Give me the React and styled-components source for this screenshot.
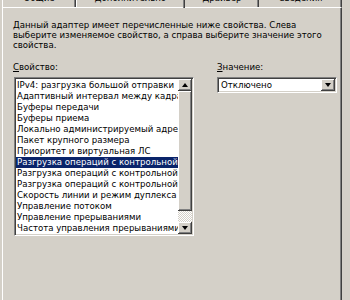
import React from 'react'
import styled, { createGlobalStyle } from 'styled-components'

const GlobalStyle = createGlobalStyle`
  html, body {
    margin: 0;
    padding: 0;
    background: #d4d0c8;
  }
  body {
    width: 350px;
    height: 300px;
    overflow: hidden;
    font-family: "DejaVu Sans", "Liberation Sans", sans-serif;
    font-size: 8.6px;
    color: #000;
  }
`

const Dialog = styled.div`
  display: flex;
  flex-direction: column;
  width: 350px;
  height: 300px;
  padding-left: 2px;
  box-sizing: border-box;
`

const TabRow = styled.div`
  display: flex;
  height: 18px;
  margin-top: -11px;
  width: 340px;
`

const Tab = styled.div`
  box-sizing: border-box;
  width: ${props => props.$width}px;
  height: 18px;
  padding-top: 4px;
  line-height: 10px;
  text-align: center;
  border-left: 1px solid ${props => props.$first || props.$selected ? '#ffffff' : 'transparent'};
  border-right: 1px solid #404040;
  box-shadow: inset -1px 0 #808080;
  position: relative;
  z-index: ${props => props.$selected ? 1 : 0};
  margin-bottom: ${props => props.$selected ? '-1px' : '0'};
  height: ${props => props.$selected ? 19 : 18}px;
`

const Panel = styled.div`
  flex: 1;
  width: 340px;
  box-sizing: border-box;
  border-top: 1px solid #ffffff;
  border-left: 1px solid #ffffff;
  border-right: 1px solid #404040;
  box-shadow: inset -1px 0 #808080;
  padding: 12px 0 0 10px;
`

const Description = styled.div`
  line-height: 10px;
  white-space: nowrap;
`

const Columns = styled.div`
  display: flex;
  gap: 23px;
  margin-top: 12px;
`

const Column = styled.div`
  display: flex;
  flex-direction: column;
  gap: 5px;
  width: ${props => props.$width}px;
`

const Label = styled.div`
  line-height: 10px;
  padding-left: ${props => props.$indent || 0}px;
`

const sunken = `
  border-style: solid;
  border-width: 1px;
  border-color: #808080 #ffffff #ffffff #808080;
  box-shadow: inset 1px 1px #404040, inset -1px -1px #d4d0c8;
`

const ListBox = styled.div`
  ${sunken}
  box-sizing: border-box;
  height: 159px;
  margin-left: 1px;
  padding: 1px;
  background: #ffffff;
  display: flex;
`

const Items = styled.div`
  flex: 1;
  overflow: hidden;
  padding-top: 1px;
`

const Item = styled.div`
  height: 11px;
  line-height: 11px;
  padding-left: 1px;
  white-space: nowrap;
  overflow: hidden;
  background: ${props => props.$selected ? '#0a246a' : 'transparent'};
  color: ${props => props.$selected ? '#ffffff' : '#000000'};
`

const ScrollBar = styled.div`
  width: 14px;
  display: flex;
  flex-direction: column;
`

const raised = `
  background: #d4d0c8;
  box-sizing: border-box;
  box-shadow: inset -1px -1px #404040, inset 1px 1px #ffffff, inset -2px -2px #808080, inset 2px 2px #d4d0c8;
`

const ScrollButton = styled.div`
  ${raised}
  width: 14px;
  height: 12px;
  display: flex;
  align-items: center;
  justify-content: center;
`

const Thumb = styled.div`
  ${raised}
  height: 120px;
`

const Track = styled.div`
  flex: 1;
  background-color: #ffffff;
  background-image: linear-gradient(45deg, #d4d0c8 25%, transparent 25%, transparent 75%, #d4d0c8 75%),
    linear-gradient(45deg, #d4d0c8 25%, transparent 25%, transparent 75%, #d4d0c8 75%);
  background-size: 2px 2px;
  background-position: 0 0, 1px 1px;
`

const Arrow = styled.div`
  width: 0;
  height: 0;
  border-left: 3.5px solid transparent;
  border-right: 3.5px solid transparent;
  border-${props => props.$up ? 'bottom' : 'top'}: 4px solid #000000;
`

const Combo = styled.div`
  ${sunken}
  box-sizing: border-box;
  height: 16px;
  padding: 1px;
  background: #ffffff;
  display: flex;
  align-items: center;
`

const ComboText = styled.div`
  flex: 1;
  padding-left: 2px;
  line-height: 12px;
`

const properties = [
  'IPv4: разгрузка большой отправки',
  'Адаптивный интервал между кадрами',
  'Буферы передачи',
  'Буферы приема',
  'Локально администрируемый адрес',
  'Пакет крупного размера',
  'Приоритет и виртуальная ЛС',
  'Разгрузка операций с контрольной',
  'Разгрузка операций с контрольной',
  'Разгрузка операций с контрольной',
  'Скорость линии и режим дуплекса',
  'Управление потоком',
  'Управление прерываниями',
  'Частота управления прерываниями',
]

export default function App() {
  return (
    <>
      <GlobalStyle />
      <Dialog>
        <TabRow>
          <Tab $width={74} $first>Общие</Tab>
          <Tab $width={109} $selected>Дополнительно</Tab>
          <Tab $width={74}>Драйвер</Tab>
          <Tab $width={83}>Сведения</Tab>
        </TabRow>
        <Panel>
          <Description>
            Данный адаптер имеет перечисленные ниже свойства. Слева<br />
            выберите изменяемое свойство, а справа выберите значение этого<br />
            свойства.
          </Description>
          <Columns>
            <Column $width={181}>
              <Label><u>С</u>войство:</Label>
              <ListBox>
                <Items>
                  {properties.map((p, i) => (
                    <Item key={i} $selected={i === 7}>{p}</Item>
                  ))}
                </Items>
                <ScrollBar>
                  <ScrollButton><Arrow $up /></ScrollButton>
                  <Thumb />
                  <Track />
                  <ScrollButton><Arrow /></ScrollButton>
                </ScrollBar>
              </ListBox>
            </Column>
            <Column $width={120}>
              <Label><u>З</u>начение:</Label>
              <Combo>
                <ComboText>Отключено</ComboText>
                <ScrollButton><Arrow /></ScrollButton>
              </Combo>
            </Column>
          </Columns>
        </Panel>
      </Dialog>
    </>
  )
}
